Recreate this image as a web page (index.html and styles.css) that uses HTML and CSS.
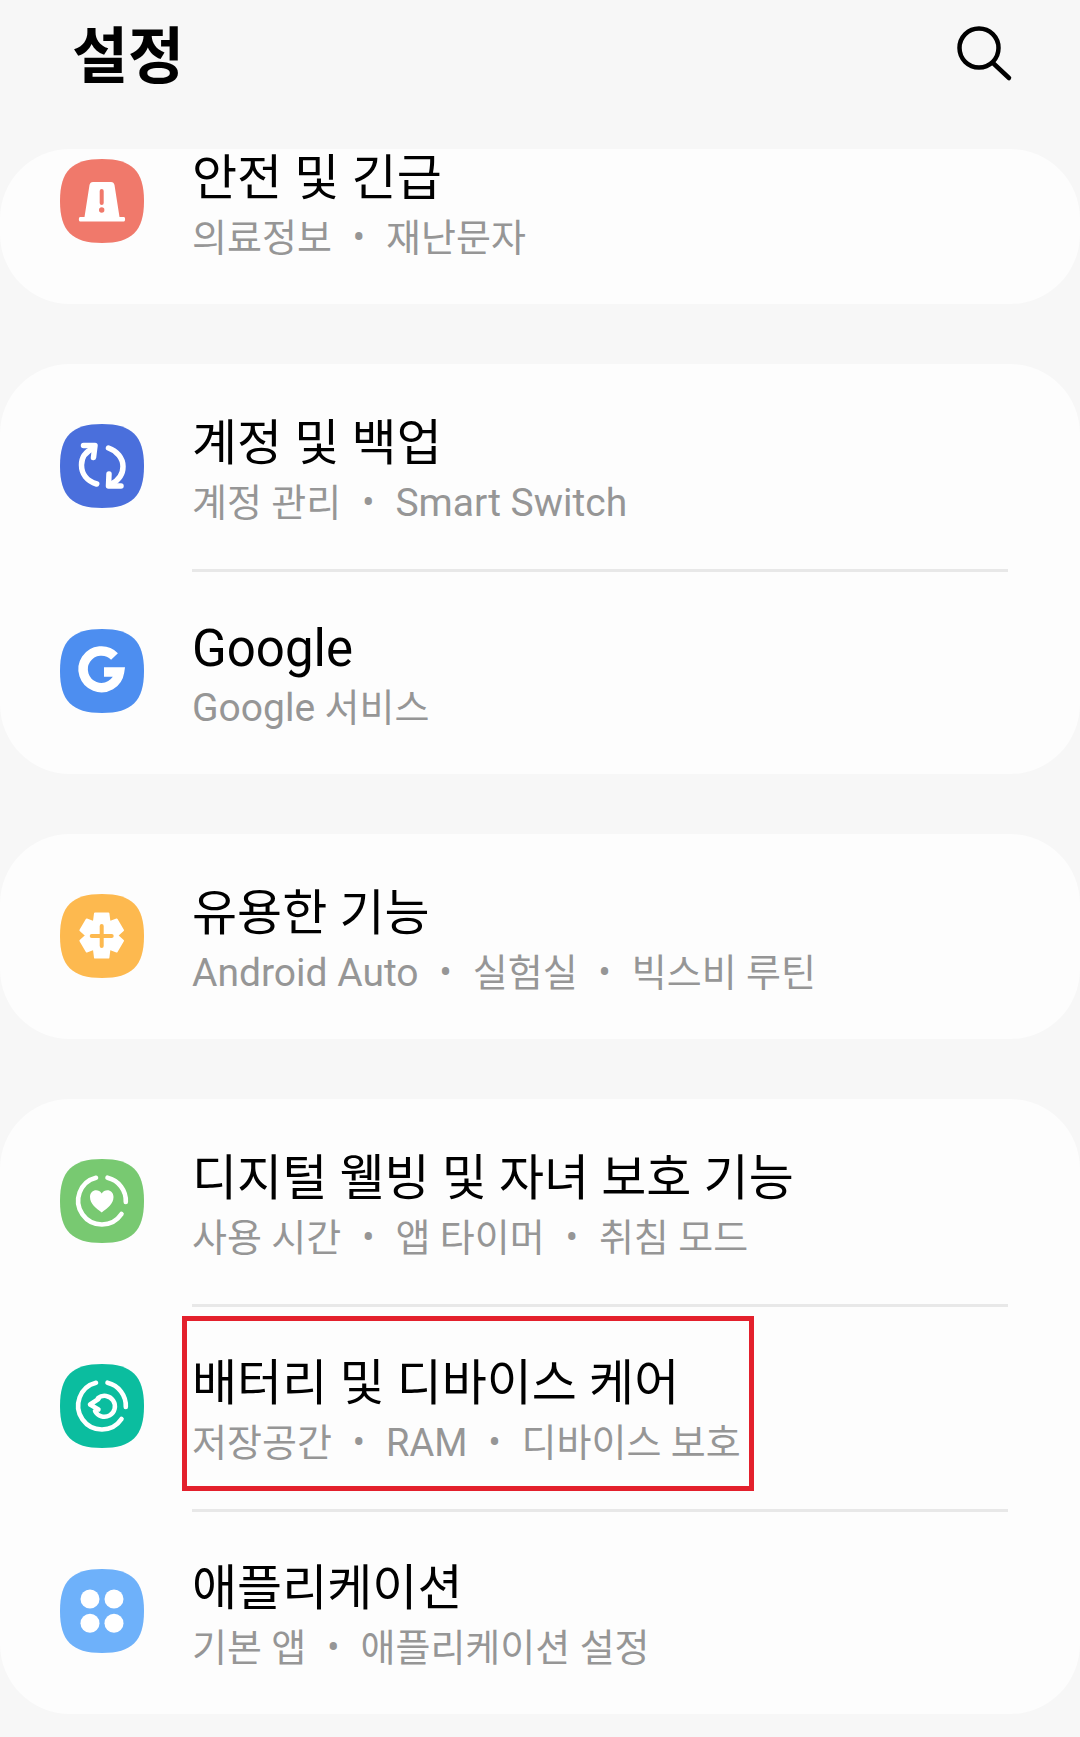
FILE: index.html

```html
<!DOCTYPE html>
<html lang="ko">
<head>
  <meta charset="UTF-8">
  <meta name="viewport" content="width=device-width, initial-scale=1.0">
  <title>설정</title>
  <link rel="stylesheet" href="styles.css">
</head>
<body>
<svg class="defs" width="0" height="0">
  <symbol id="squircle" viewBox="0 0 84 84">
    <path d="M42 0C72 0 84 12 84 42C84 72 72 84 42 84C12 84 0 72 0 42C0 12 12 0 42 0Z" fill="currentColor"/>
  </symbol>
</svg>

<header class="top">
  <h1>설정</h1>
  <svg class="search" viewBox="0 0 60 60" fill="none" stroke="#000" stroke-width="4.5" stroke-linecap="round">
    <circle cx="24" cy="23" r="19.5"/>
    <path d="M38 38L54 53"/>
  </svg>
</header>

<section class="card">
  <div class="row row-cut">
    <svg class="icon coral" viewBox="0 0 84 84">
      <use href="#squircle"/>
      <path d="M33 23H51C53 23 54 24 54.5 26L59.5 58H64C65.5 58 65.5 62.500 64 62.500H20C18.500 62.500 18.500 58 20 58H24.500L29.500 26C30 24 31 23 33 23Z" fill="#fff"/>
      <path d="M41.700 32V44" stroke="currentColor" stroke-width="4" stroke-linecap="round"/>
      <circle cx="41.700" cy="51" r="2.700" fill="currentColor"/>
    </svg>
    <div class="row-text">
      <div class="name">안전 및 긴급</div>
      <div class="desc">의료정보<span class="dot">•</span>재난문자</div>
    </div>
  </div>
</section>

<section class="card">
  <div class="row">
    <svg class="icon blue" viewBox="0 0 84 84">
      <use href="#squircle"/>
      <g fill="none" stroke="#fff" stroke-width="5.500" stroke-linecap="round" stroke-linejoin="round">
        <path d="M36.700 60C27 57 21.500 50 21.500 41C21.500 34 25 28 33 24.500"/>
        <path d="M23.500 21.500H35L33.500 33.500"/>
        <path d="M48.500 24C57 27 63 34 63 42.500C63 50 59 56 51.500 60"/>
        <path d="M61 62H48.500L49 50"/>
      </g>
    </svg>
    <div class="row-text">
      <div class="name">계정 및 백업</div>
      <div class="desc">계정 관리<span class="dot">•</span><span class="en">Smart Switch</span></div>
    </div>
  </div>
  <div class="row">
    <svg class="icon gblue" viewBox="0 0 84 84">
      <use href="#squircle"/>
      <path d="M54.500 27.500A18.300 18.300 0 1 0 59.500 43H44" fill="none" stroke="#fff" stroke-width="9.500"/>
    </svg>
    <div class="row-text">
      <div class="name name-en">Google</div>
      <div class="desc"><span class="en">Google</span> 서비스</div>
    </div>
  </div>
</section>

<section class="card">
  <div class="row">
    <svg class="icon yellow" viewBox="0 0 84 84">
      <use href="#squircle"/>
      <polygon points="35,19.500 48.400,19.500 49.500,28.100 56.700,25.400 63,36.200 57.200,41.500 63,46.800 56.700,57.600 49.500,54.900 48.400,63.500 35,63.500 33.900,54.900 26.700,57.600 20.400,46.800 26.200,41.500 20.400,36.200 26.700,25.400 33.900,28.100" fill="#fff" stroke="#fff" stroke-width="2" stroke-linejoin="round"/>
      <path d="M41.700 32V52M31.700 42H51.700" stroke="currentColor" stroke-width="4" stroke-linecap="round"/>
    </svg>
    <div class="row-text">
      <div class="name">유용한 기능</div>
      <div class="desc"><span class="en">Android Auto</span><span class="dot">•</span>실험실<span class="dot">•</span>빅스비 루틴</div>
    </div>
  </div>
</section>

<section class="card">
  <div class="row">
    <svg class="icon green" viewBox="0 0 84 84">
      <use href="#squircle"/>
      <g fill="none" stroke="#fff" stroke-width="4.600" stroke-linecap="round">
        <path d="M65.800 43A23.700 23.700 0 0 0 47.500 18.700"/>
        <path d="M36 18.800A23.700 23.700 0 1 0 61.500 55"/>
      </g>
      <path d="M41.700 53.500C36 49 30 45 30 38C30 30.500 38.500 29 41.700 34.500C45 29 53.500 30.500 53.500 38C53.500 45 47.500 49 41.700 53.500Z" fill="#fff"/>
    </svg>
    <div class="row-text">
      <div class="name">디지털 웰빙 및 자녀 보호 기능</div>
      <div class="desc">사용 시간<span class="dot">•</span>앱 타이머<span class="dot">•</span>취침 모드</div>
    </div>
  </div>
  <div class="row">
    <svg class="icon teal" viewBox="0 0 84 84">
      <use href="#squircle"/>
      <g fill="none" stroke="#fff" stroke-linecap="round" stroke-linejoin="round">
        <g stroke-width="4.600">
          <path d="M65.800 43A23.700 23.700 0 0 0 47.500 18.700"/>
          <path d="M36 18.800A23.700 23.700 0 1 0 61.500 55"/>
        </g>
        <g stroke-width="4.500">
          <path d="M38 34A10.500 10.500 0 1 1 35 47"/>
          <path d="M38.500 35L30 40.500L38.500 45.500"/>
        </g>
      </g>
    </svg>
    <div class="row-text">
      <div class="name">배터리 및 디바이스 케어</div>
      <div class="desc">저장공간<span class="dot">•</span>RAM<span class="dot">•</span>디바이스 보호</div>
    </div>
    <div class="highlight"></div>
  </div>
  <div class="row">
    <svg class="icon sky" viewBox="0 0 84 84">
      <use href="#squircle"/>
      <g fill="#fff">
        <circle cx="30" cy="30" r="9.500"/>
        <circle cx="54" cy="30" r="9.500"/>
        <circle cx="30" cy="54.300" r="9.500"/>
        <circle cx="54" cy="54.300" r="9.500"/>
      </g>
    </svg>
    <div class="row-text">
      <div class="name">애플리케이션</div>
      <div class="desc">기본 앱<span class="dot">•</span>애플리케이션 설정</div>
    </div>
  </div>
</section>
</body>
</html>
```

FILE: styles.css

```css
body {
  margin: 0;
  height: 1737px;
  overflow: hidden;
  background-color: #f7f7f7;
  font-family: Roboto, "Noto Sans CJK KR", sans-serif;
}
.defs { position: absolute; }

.top {
  display: flex;
  justify-content: space-between;
  height: 149px;
  padding: 0 65px 0 72px;
}
.top h1 {
  margin: 22px 0 0;
  font-size: 61px;
  line-height: 70px;
  font-weight: 700;
  color: #000;
}
.search { width: 60px; height: 60px; margin-top: 25px; }

.card {
  overflow: hidden;
  margin-bottom: 60px;
  background: #fdfdfd;
  border-radius: 70px;
}
.row {
  position: relative;
  display: flex;
  height: 205px;
  padding: 0 72px 0 60px;
}
.row-cut { margin-top: -50px; }
.row + .row .row-text { border-top: 3px solid #e8e8e8; padding-top: 10px; }

.icon { flex: none; align-self: center; width: 84px; height: 84px; margin: 0 48px 2px 0; }
.coral { color: #f0796b; }
.blue { color: #4a6fdc; }
.gblue { color: #4d8ef0; }
.yellow { color: #fdb94f; }
.green { color: #78c971; }
.teal { color: #0bbd9f; }
.sky { color: #6eb1fa; }

.row-text {
  flex: 1;
  display: flex;
  flex-direction: column;
  justify-content: center;
  box-sizing: border-box;
  padding-top: 14px;
}
.name { font-size: 49px; line-height: 60px; color: #000; }
.name-en { font-size: 51px; }
.desc { font-size: 38px; line-height: 59px; color: #969696; }
.en { font-size: 39px; }
.dot { margin: 0 21px; font-size: 36px; vertical-align: 1px; }

.highlight {
  position: absolute;
  left: 182px;
  top: 12px;
  width: 562px;
  height: 165px;
  border: 5px solid #e3202c;
}
```
